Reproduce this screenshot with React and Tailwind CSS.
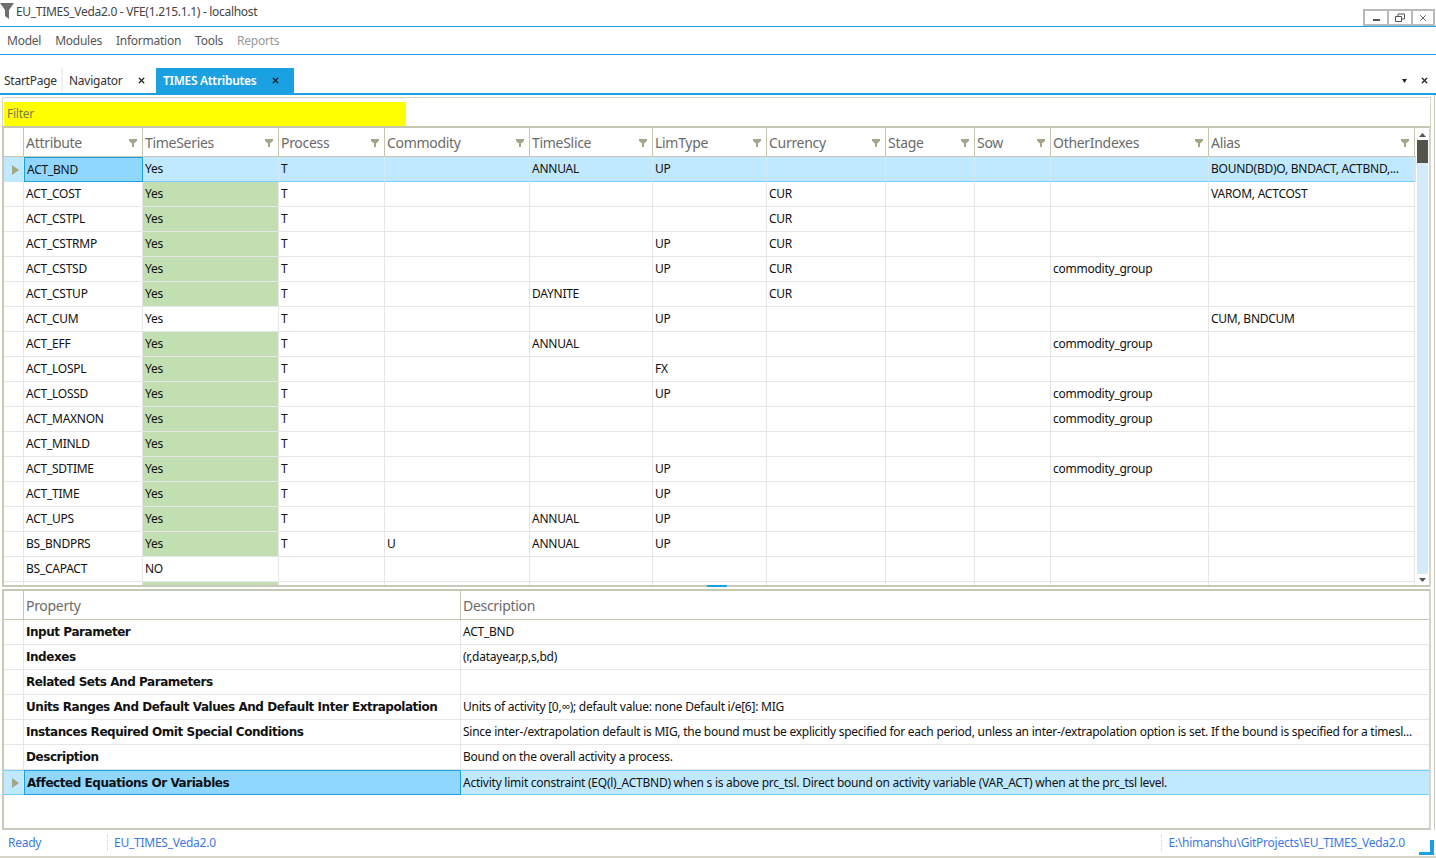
import React from 'react';
import { X } from 'lucide-react';

const font = "font-['Noto_Sans','Open_Sans',sans-serif]";
const gridCols = 'grid-cols-[20px_119px_136px_106px_145px_123px_114px_119px_89px_76px_158px_206px]';

const columns = ['Attribute', 'TimeSeries', 'Process', 'Commodity', 'TimeSlice', 'LimType', 'Currency', 'Stage', 'Sow', 'OtherIndexes', 'Alias'];

const rows = [
  ['ACT_BND', 'Yes', 'T', '', 'ANNUAL', 'UP', '', '', '', '', 'BOUND(BD)O,  BNDACT,  ACTBND,...'],
  ['ACT_COST', 'Yes', 'T', '', '', '', 'CUR', '', '', '', 'VAROM, ACTCOST'],
  ['ACT_CSTPL', 'Yes', 'T', '', '', '', 'CUR', '', '', '', ''],
  ['ACT_CSTRMP', 'Yes', 'T', '', '', 'UP', 'CUR', '', '', '', ''],
  ['ACT_CSTSD', 'Yes', 'T', '', '', 'UP', 'CUR', '', '', 'commodity_group', ''],
  ['ACT_CSTUP', 'Yes', 'T', '', 'DAYNITE', '', 'CUR', '', '', '', ''],
  ['ACT_CUM', 'Yes', 'T', '', '', 'UP', '', '', '', '', 'CUM, BNDCUM'],
  ['ACT_EFF', 'Yes', 'T', '', 'ANNUAL', '', '', '', '', 'commodity_group', ''],
  ['ACT_LOSPL', 'Yes', 'T', '', '', 'FX', '', '', '', '', ''],
  ['ACT_LOSSD', 'Yes', 'T', '', '', 'UP', '', '', '', 'commodity_group', ''],
  ['ACT_MAXNON', 'Yes', 'T', '', '', '', '', '', '', 'commodity_group', ''],
  ['ACT_MINLD', 'Yes', 'T', '', '', '', '', '', '', '', ''],
  ['ACT_SDTIME', 'Yes', 'T', '', '', 'UP', '', '', '', 'commodity_group', ''],
  ['ACT_TIME', 'Yes', 'T', '', '', 'UP', '', '', '', '', ''],
  ['ACT_UPS', 'Yes', 'T', '', 'ANNUAL', 'UP', '', '', '', '', ''],
  ['BS_BNDPRS', 'Yes', 'T', 'U', 'ANNUAL', 'UP', '', '', '', '', ''],
  ['BS_CAPACT', 'NO', '', '', '', '', '', '', '', '', ''],
  ['', 'Yes', '', '', '', '', '', '', '', '', ''],
];

const details = [
  ['Input Parameter', 'ACT_BND'],
  ['Indexes', '(r,datayear,p,s,bd)'],
  ['Related Sets And Parameters', ''],
  ['Units Ranges And Default Values And Default Inter Extrapolation', 'Units of activity [0,∞); default value: none Default i/e[6]: MIG'],
  ['Instances Required Omit Special Conditions', 'Since inter-/extrapolation default is MIG, the bound must be explicitly specified for each period, unless an inter-/extrapolation option is set. If the bound is specified for a timesl...'],
  ['Description', 'Bound on the overall activity a process.'],
  ['Affected Equations Or Variables', 'Activity limit constraint (EQ(l)_ACTBND) when s is above prc_tsl. Direct bound on activity variable (VAR_ACT) when at the prc_tsl level.'],
];

function FilterIcon({ className }) {
  return (
    <svg width="8" height="8" viewBox="0 0 8 8" className={className}>
      <path d="M0 0H8V2L5 4.5V8H3V4.5L0 2Z" fill="#a3a785" />
    </svg>
  );
}

function RowArrow() {
  return (
    <svg width="7" height="10" viewBox="0 0 7 10">
      <path d="M0 0L7 5L0 10Z" fill="#a3a785" />
    </svg>
  );
}

function WindowButton({ children, last }) {
  return (
    <div className={`w-[24px] h-[17px] border-2 border-[#b9b9b9] flex items-center justify-center ${last ? '' : 'border-r-0'}`}>
      {children}
    </div>
  );
}

function AttributeRow({ row, index }) {
  const selected = index === 0;
  const isPlain = row[1] === 'NO' || row[0] === 'ACT_CUM';
  return (
    <div className={`grid ${gridCols} h-[25px] shrink-0 text-[12px] text-[#111] ${selected ? 'bg-[#c0e9ff]' : ''}`}>
      <div className={`flex items-center pl-[8px] border-r border-[#e6e6e6] ${selected ? '' : 'border-b'} border-b-[#e6e6e6]`}>
        {selected && <RowArrow />}
      </div>
      {row.map((cell, i) => {
        let cls = 'border-b border-r border-[#e6e6e6]';
        if (selected) cls = 'border-b border-b-[#76d0fd] border-r border-r-[#d4eaf6]';
        if (selected && i === 0) cls = 'bg-[#90d7ff] border border-[#1ba1e2]';
        if (i === 1 && !selected && !isPlain) cls = 'bg-[#c1dfb0] border-b border-r border-[#e6e6e6]';
        return (
          <div key={i} className={`${cls} pl-[2px] flex items-center whitespace-nowrap overflow-hidden leading-none tracking-[-0.25px]`}>
            {cell}
          </div>
        );
      })}
    </div>
  );
}

function DetailRow({ row, selected }) {
  return (
    <div className={`grid grid-cols-[20px_437px_1fr] h-[25px] shrink-0 text-[12px] text-[#111] ${selected ? 'bg-[#c0e9ff] border-y border-[#76d0fd]' : 'border-b border-[#e6e6e6]'}`}>
      <div className="flex items-center pl-[8px] border-r border-[#e6e6e6]">
        {selected && <RowArrow />}
      </div>
      <div className={`pl-[2px] flex items-center font-['DejaVu_Sans',sans-serif] font-bold text-[12px] tracking-[-0.45px] ${selected ? 'bg-[#90d7ff] border border-[#1ba1e2] -my-px' : 'border-r border-[#e6e6e6]'}`}>
        {row[0]}
      </div>
      <div className="pl-[2px] flex items-center whitespace-nowrap overflow-hidden tracking-[-0.25px]">{row[1]}</div>
    </div>
  );
}

function App() {
  return (
    <div className={`${font} w-[1436px] h-[858px] bg-white flex flex-col overflow-hidden relative`}>
      {/* Title bar */}
      <div className="h-[27px] shrink-0 flex border-b border-[#1ba1e2] relative">
        <div className="flex items-start pt-[3px]">
          <svg width="14" height="16" viewBox="0 0 14 16">
            <path d="M0 0H14L9 7V16L5 13V7Z" fill="#6e6e6e" />
          </svg>
          <span className="text-[12px] leading-[17px] text-[#444] ml-[2px] tracking-[-0.3px]">EU_TIMES_Veda2.0 - VFE(1.215.1.1) - localhost</span>
        </div>
        <div className="ml-auto mt-[9px] mr-[1px] flex">
          <WindowButton>
            <div className="w-[7px] h-[2px] bg-[#555] mt-[4px]" />
          </WindowButton>
          <WindowButton>
            <svg width="10" height="9" viewBox="0 0 10 9" fill="none" stroke="#555">
              <path d="M0.5 3.5H6.5V8.5H0.5ZM3 3V1H9.5V6H7" />
            </svg>
          </WindowButton>
          <WindowButton last>
            <X size={10} strokeWidth={2.2} color="#555" />
          </WindowButton>
        </div>
      </div>

      {/* Menu */}
      <div className="h-[28px] shrink-0 flex items-center border-b border-[#1ba1e2] text-[12px] text-[#555] pl-[7px] gap-[14px] tracking-[-0.25px]">
        <span>Model</span>
        <span>Modules</span>
        <span>Information</span>
        <span>Tools</span>
        <span className="text-[#999]">Reports</span>
      </div>

      {/* Tabs */}
      <div className="h-[40px] shrink-0 flex items-end border-b-2 border-[#1ba1e2] relative">
        <div className="h-[25px] w-[63px] flex items-center pl-[4px] text-[12px] text-[#333] border-r-2 border-[#f1f1f1] tracking-[-0.25px]">StartPage</div>
        <div className="h-[25px] w-[93px] flex items-center pl-[6px] text-[12px] text-[#333] tracking-[-0.25px]">
          Navigator
          <X size={9} strokeWidth={3.5} color="#222" className="ml-[15px]" />
        </div>
        <div className="h-[25px] w-[138px] bg-[#1ba1e2] flex items-center pl-[7px] text-[12px] font-semibold text-white tracking-[-0.3px]">
          TIMES Attributes
          <X size={9} strokeWidth={3.5} color="#222" className="ml-[15px]" />
        </div>
        <div className="ml-auto h-[25px] flex items-center gap-[13px] pr-[7px]">
          <svg width="5" height="4" viewBox="0 0 5 4"><path d="M0 0H5L2.5 4Z" fill="#222" /></svg>
          <X size={9} strokeWidth={3.5} color="#222" />
        </div>
      </div>

      {/* Main */}
      <div className="flex-1 min-h-0 flex flex-col pl-[2px] pr-[1px] border-r border-[#c9cabb] mr-px">
        {/* Filter */}
        <div className="h-[31px] shrink-0 mt-[2px] border border-[#d5d6c9] border-b-0 mr-[2px] pt-[4px] pl-px">
          <div className="w-[402px] h-[24px] bg-[#ffff00] flex items-center pl-[3px] text-[12px] text-[#7d7d55] tracking-[-0.25px]">Filter</div>
        </div>

        {/* Attributes grid */}
        <div className="h-[461px] shrink-0 flex border-t-2 border-[#c6c7b3] border-l-2 border-l-[#c9cabb] border-r-2 border-r-[#d5d6c9] border-b-2 border-b-[#c9cabb] mr-[2px] mt-[-2px] overflow-hidden">
          <div className="w-[1412px] shrink-0 flex flex-col overflow-hidden">
            <div className={`grid ${gridCols} h-[29px] shrink-0 border-b border-[#c6c7b3] text-[14px] text-[#6b6b6b] tracking-[-0.3px]`}>
              <div className="border-r border-[#c6c7b3]" />
              {columns.map((name) => (
                <div key={name} className="relative flex items-center pl-[2px] border-r border-[#c6c7b3]">
                  {name}
                  <FilterIcon className="absolute right-[5px] top-[11px]" />
                </div>
              ))}
            </div>
            {rows.map((row, i) => (
              <AttributeRow key={i} row={row} index={i} />
            ))}
          </div>
          <div className="flex-1 flex flex-col items-center relative">
            <svg width="7" height="4" viewBox="0 0 7 4" className="mt-[5px]"><path d="M0 4L3.5 0L7 4Z" fill="#555" /></svg>
            <div className="w-[11px] flex-1 bg-[#d4eaf8] mt-[3px] mb-[4px]">
              <div className="h-[23px] bg-[#54544c]" />
            </div>
            <svg width="7" height="4" viewBox="0 0 7 4" className="mb-[3px]"><path d="M0 0H7L3.5 4Z" fill="#555" /></svg>
          </div>
        </div>

        {/* Splitter */}
        <div className="h-[2px] shrink-0 mt-[-1px] mb-[1px] pl-[705px] relative">
          <div className="w-[20px] h-[2px] bg-[#1ba1e2] mt-[-1px]" />
        </div>

        {/* Details grid */}
        <div className="flex-1 min-h-0 flex flex-col border-t-2 border-[#c6c7b3] border-l-2 border-l-[#c9cabb] border-r-2 border-r-[#d5d6c9] border-b-2 border-b-[#c9cabb] mr-[2px] overflow-hidden">
          <div className="grid grid-cols-[20px_437px_1fr] h-[29px] shrink-0 border-b border-[#c6c7b3] text-[14px] text-[#6b6b6b] tracking-[-0.3px]">
            <div className="border-r border-[#c6c7b3]" />
            <div className="flex items-center pl-[2px] border-r border-[#c6c7b3]">Property</div>
            <div className="flex items-center pl-[2px]">Description</div>
          </div>
          {details.map((row, i) => (
            <DetailRow key={row[0]} row={row} selected={i === details.length - 1} />
          ))}
        </div>
      </div>

      {/* Status bar */}
      <div className="h-[28px] shrink-0 flex items-center text-[12px] text-[#3b78e7] pl-[8px] border-b-2 border-[#d5d6c9] relative tracking-[-0.25px]">
        <span className="w-[100px] border-r border-dotted border-[#a9d8f3] h-[16px] leading-[16px]">Ready</span>
        <span className="pl-[6px]">EU_TIMES_Veda2.0</span>
        <span className="ml-auto border-l border-dotted border-[#a9d8f3] h-[16px] leading-[16px] pl-[6px] mr-[31px]">E:\himanshu\GitProjects\EU_TIMES_Veda2.0</span>
        <div className="absolute right-[2px] bottom-[1px] w-[15px] h-[15px] border-r-[4px] border-b-[3px] border-[#1ba1e2]" />
      </div>
    </div>
  );
}

export default App;
